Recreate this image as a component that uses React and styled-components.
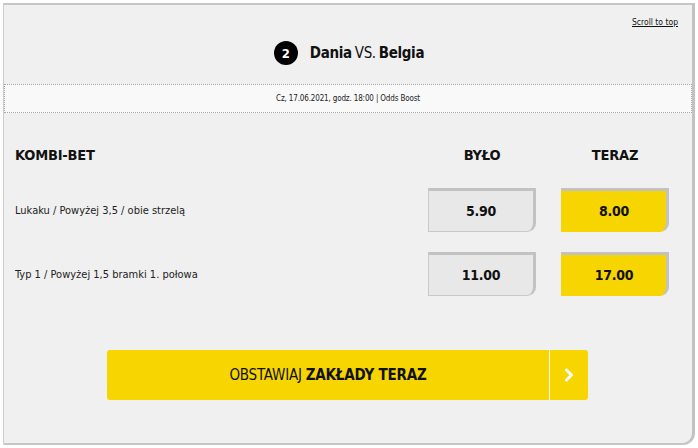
import React from "react";
import styled, { createGlobalStyle } from "styled-components";

const FONT = `"Liberation Sans Narrow", "DejaVu Sans Condensed", "Roboto", sans-serif`;

const GlobalStyle = createGlobalStyle`
  html, body { margin: 0; padding: 0; background: #ffffff; }
  body { font-family: ${FONT}; color: #111; }
  * { box-sizing: border-box; }
`;

const Card = styled.div`
  margin: 3px 0 0 3px;
  width: 692px;
  height: 442px;
  background: #f0f0f0;
  border-top: 2px solid #c6c6c6;
  border-left: 1px solid #cccccc;
  border-right: 3px solid #c2c2c2;
  border-bottom: 2px solid #c6c6c6;
  border-bottom-right-radius: 12px;
  display: flex;
  flex-direction: column;
`;

const TopBar = styled.div`
  display: flex;
  justify-content: flex-end;
  padding: 12px 14px 0 0;
  height: 26px;
`;

const ScrollLink = styled.a`
  font-size: 8.5px;
  color: #111;
  text-decoration: underline;
  cursor: pointer;
`;

const Title = styled.div`
  display: flex;
  align-items: center;
  justify-content: center;
  gap: 12px;
  height: 44px;
  font-size: 15px;
  letter-spacing: -0.35px;
  padding-left: 2px;
`;

const Badge = styled.span`
  width: 24px;
  height: 24px;
  border-radius: 50%;
  background: #000;
  color: #fff;
  font-weight: 700;
  font-size: 13px;
  letter-spacing: 0;
  display: inline-flex;
  align-items: center;
  justify-content: center;
`;

const Team = styled.b`
  font-weight: 700;
`;

const Vs = styled.span`
  font-weight: 400;
  margin: 0 3px;
`;

const DateBar = styled.div`
  margin-top: 9px;
  height: 29px;
  background: #f9f9f9;
  border: 1px dotted #a8a8a8;
  display: flex;
  align-items: center;
  justify-content: center;
  font-size: 8px;
  letter-spacing: -0.15px;
  color: #222;
`;

const Table = styled.div`
  display: grid;
  grid-template-columns: 1fr 108px 108px;
  column-gap: 25px;
  row-gap: 20px;
  padding: 30px 23px 0 11px;
  align-items: center;
`;

const HeadCell = styled.div`
  font-size: 14.5px;
  font-weight: 700;
  letter-spacing: -0.2px;
  text-align: ${(p) => (p.$center ? "center" : "left")};
  height: 24px;
  line-height: 24px;
  margin-bottom: 1px;
`;

const Label = styled.div`
  font-size: 11px;
  color: #222;
`;

const Odd = styled.div`
  height: 44px;
  display: flex;
  align-items: center;
  justify-content: center;
  font-size: 14px;
  letter-spacing: -0.3px;
  font-weight: 700;
  color: #111;
  background: ${(p) => (p.$boost ? "#f6d500" : "#e8e8e8")};
  border-top: 3px solid #c2c2c2;
  border-right: 3px solid #c2c2c2;
  border-left: 1px solid ${(p) => (p.$boost ? "#f6d500" : "#c8c8c8")};
  border-bottom: 1px solid ${(p) => (p.$boost ? "#f6d500" : "#c8c8c8")};
  border-bottom-right-radius: 9px;
`;

const ButtonWrap = styled.div`
  display: flex;
  padding: 54px 0 0 103px;
`;

const CtaButton = styled.button`
  width: 481px;
  height: 50px;
  border: none;
  padding: 0;
  border-radius: 3px;
  background: #f6d500;
  display: flex;
  align-items: stretch;
  cursor: pointer;
  font-family: ${FONT};
`;

const CtaText = styled.span`
  flex: 1;
  display: flex;
  align-items: center;
  justify-content: center;
  font-size: 15px;
  letter-spacing: -0.2px;
  color: #111;
  border-right: 1px solid #ffffff;
`;

const CtaStrong = styled.b`
  font-weight: 700;
  margin-left: 4px;
`;

const CtaArrow = styled.span`
  width: 38px;
  display: flex;
  align-items: center;
  justify-content: center;
`;

const rows = [
  { label: "Lukaku / Powyżej 3,5 / obie strzelą", was: "5.90", now: "8.00" },
  { label: "Typ 1 / Powyżej 1,5 bramki 1. połowa", was: "11.00", now: "17.00" },
];

export default function App() {
  return (
    <>
      <GlobalStyle />
      <Card>
        <TopBar>
          <ScrollLink>Scroll to top</ScrollLink>
        </TopBar>
        <Title>
          <Badge>2</Badge>
          <span>
            <Team>Dania</Team>
            <Vs>VS.</Vs>
            <Team>Belgia</Team>
          </span>
        </Title>
        <DateBar>Cz, 17.06.2021, godz. 18:00 | Odds Boost</DateBar>
        <Table>
          <HeadCell>KOMBI-BET</HeadCell>
          <HeadCell $center>BYŁO</HeadCell>
          <HeadCell $center>TERAZ</HeadCell>
          {rows.map((r) => (
            <React.Fragment key={r.label}>
              <Label>{r.label}</Label>
              <Odd>{r.was}</Odd>
              <Odd $boost>{r.now}</Odd>
            </React.Fragment>
          ))}
        </Table>
        <ButtonWrap>
          <CtaButton>
            <CtaText>
              OBSTAWIAJ<CtaStrong>ZAKŁADY TERAZ</CtaStrong>
            </CtaText>
            <CtaArrow>
              <svg width="10" height="14" viewBox="0 0 10 14">
                <polyline
                  points="2.5,2 7.5,7 2.5,12"
                  fill="none"
                  stroke="#ffffff"
                  strokeWidth="3"
                  strokeLinecap="round"
                  strokeLinejoin="round"
                />
              </svg>
            </CtaArrow>
          </CtaButton>
        </ButtonWrap>
      </Card>
    </>
  );
}
